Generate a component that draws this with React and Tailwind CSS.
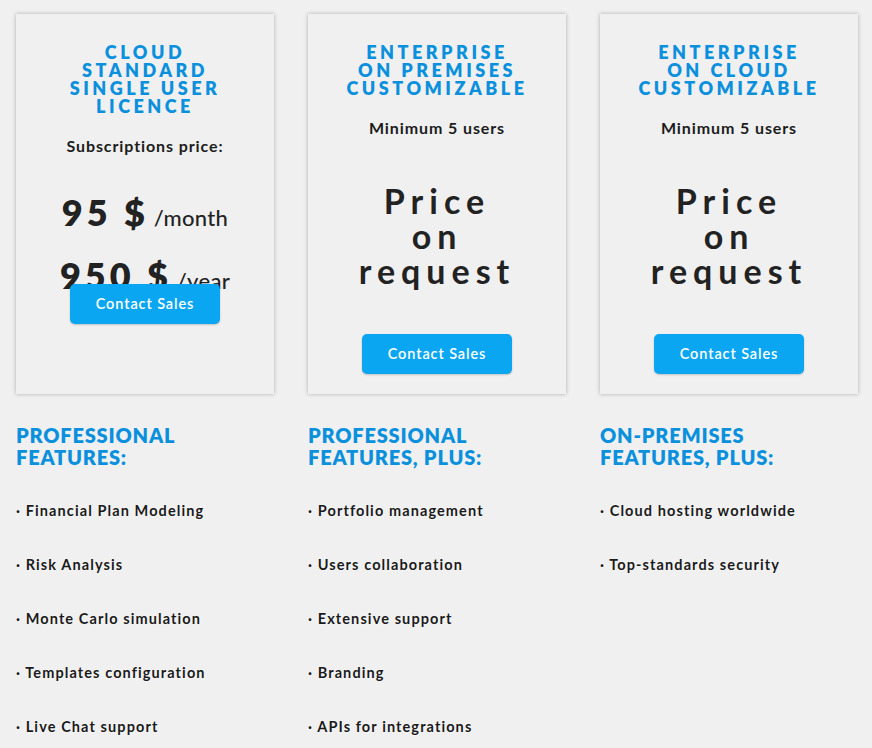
import React from "react";

const FONT = { fontFamily: "Lato, 'Open Sans', Arial, sans-serif" };

const plans = [
  {
    title: ["CLOUD", "STANDARD", "SINGLE USER", "LICENCE"],
    subtitle: "Subscriptions price:",
    kind: "subscription",
    heading: ["PROFESSIONAL", "FEATURES:"],
    features: [
      "Financial Plan Modeling",
      "Risk Analysis",
      "Monte Carlo simulation",
      "Templates configuration",
      "Live Chat support",
    ],
  },
  {
    title: ["ENTERPRISE", "ON PREMISES", "CUSTOMIZABLE"],
    subtitle: "Minimum 5 users",
    kind: "request",
    heading: ["PROFESSIONAL", "FEATURES, PLUS:"],
    features: [
      "Portfolio management",
      "Users collaboration",
      "Extensive support",
      "Branding",
      "APIs for integrations",
    ],
  },
  {
    title: ["ENTERPRISE", "ON CLOUD", "CUSTOMIZABLE"],
    subtitle: "Minimum 5 users",
    kind: "request",
    heading: ["ON-PREMISES", "FEATURES, PLUS:"],
    features: ["Cloud hosting worldwide", "Top-standards security"],
  },
];

const ContactButton = () => (
  <button className="relative w-[150px] h-10 mx-auto rounded-[5px] bg-[#0aa6f2] text-white text-[14.5px] font-semibold tracking-[0.9px] shadow-[0_1px_2px_rgba(0,0,0,0.2)]">
    Contact Sales
  </button>
);

const PlanCard = ({ plan }) => (
  <div className="h-[380px] bg-[#f0f0f0] shadow-[0_0_4px_rgba(0,0,0,0.28)] flex flex-col pt-[29px] text-center">
    <h2 className="text-[18px] leading-[18px] font-extrabold tracking-[3.5px] text-[#0a90dd]">
      {plan.title.map((line) => (
        <div key={line}>{line}</div>
      ))}
    </h2>
    <p className="mt-[21px] text-[16px] leading-5 font-bold text-[#1c1c1c] tracking-[0.9px]">
      {plan.subtitle}
    </p>

    {plan.kind === "subscription" ? (
      <>
        <div className="mt-[29px] h-[99px] text-[#222]">
          <div className="h-10 flex items-baseline justify-center gap-[5px]">
            <span className="text-[36px] font-extrabold tracking-[4px]">95 $</span>
            <span className="text-[22px] font-medium tracking-[0.3px]">/month</span>
          </div>
          <div className="mt-[23px] h-10 flex items-baseline justify-center gap-[5px]">
            <span className="text-[36px] font-extrabold tracking-[4px]">950 $</span>
            <span className="text-[22px] font-medium tracking-[0.3px]">/year</span>
          </div>
        </div>
        <ContactButton />
      </>
    ) : (
      <>
        <div className="mt-[45px] text-[34px] leading-[35px] font-bold tracking-[6px] text-[#222]">
          <div>Price</div>
          <div>on</div>
          <div>request</div>
        </div>
        <div className="mt-[46px]">
          <ContactButton />
        </div>
      </>
    )}
  </div>
);

const Features = ({ plan }) => (
  <div className="mt-[30px]">
    <h3 className="text-[20px] leading-[22px] font-extrabold tracking-[0.8px] text-[#0a90dd]">
      {plan.heading.map((line) => (
        <div key={line}>{line}</div>
      ))}
    </h3>
    <ul className="mt-[33px] flex flex-col gap-[34px]">
      {plan.features.map((f) => (
        <li
          key={f}
          className="text-[14.5px] leading-5 font-bold tracking-[1.1px] text-[#1a1a1a] [text-shadow:0_0_2px_rgba(255,255,255,0.9)]"
        >
          · {f}
        </li>
      ))}
    </ul>
  </div>
);

export default function App() {
  return (
    <div
      className="min-h-[748px] w-[872px] bg-[#f0f0f0] px-4 pt-[14px] overflow-hidden"
      style={FONT}
    >
      <div className="grid grid-cols-[258px_258px_258px] gap-x-[34px]">
        {plans.map((plan) => (
          <div key={plan.title.join(" ")} className="flex flex-col">
            <PlanCard plan={plan} />
            <Features plan={plan} />
          </div>
        ))}
      </div>
    </div>
  );
}
